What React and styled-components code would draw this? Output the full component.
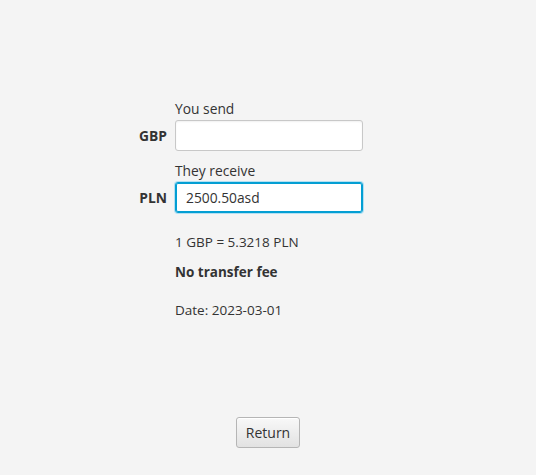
import React from 'react';
import styled, { createGlobalStyle } from 'styled-components';

const GlobalStyle = createGlobalStyle`
  html, body {
    margin: 0;
    padding: 0;
    background: #f4f4f4;
  }
  body {
    font-family: "Open Sans", "Noto Sans", sans-serif;
    color: #333;
  }
`;

const Page = styled.div`
  height: 475px;
  display: flex;
  flex-direction: column;
  align-items: center;
  background: #f4f4f4;
  box-sizing: border-box;
  padding-top: 100px;
`;

const Form = styled.div`
  align-self: flex-start;
  margin-left: 107px;
  display: grid;
  grid-template-columns: 60px 188px;
  column-gap: 8px;
`;

const Caption = styled.div`
  grid-column: 2;
  font-size: 13.8px;
  line-height: 18px;
  margin-top: ${p => p.$top || 0}px;
  margin-bottom: 2px;
  color: #333;
`;

const Code = styled.div`
  grid-column: 1;
  display: flex;
  align-items: center;
  justify-content: flex-end;
  font-size: 13.8px;
  font-weight: bold;
  color: #333;
`;

const Field = styled.input`
  grid-column: 2;
  box-sizing: border-box;
  width: 188px;
  height: 31px;
  margin: 0;
  padding: 0 10px;
  font-family: inherit;
  font-size: 13.8px;
  color: #333;
  background: #fff;
  border: 1px solid ${p => (p.$focused ? '#039ed3' : '#c8c8c8')};
  border-radius: 3px;
  outline: none;
  box-shadow: ${p => (p.$focused ? '0 0 0 1px #b3e0f2, inset 0 0 0 1px #039ed3' : 'inset 0 1px 2px rgba(0,0,0,0.06)')};
`;

const Info = styled.div`
  grid-column: 2;
  font-size: 13.5px;
  line-height: 18px;
  font-weight: ${p => (p.$bold ? 'bold' : 'normal')};
  margin-top: ${p => p.$top}px;
  color: #333;
`;

const ReturnButton = styled.button`
  margin-top: auto;
  margin-bottom: 27px;
  width: 64px;
  height: 31px;
  padding: 0;
  font-family: inherit;
  font-size: 14px;
  color: #333;
  border: 1px solid #b5b5b5;
  border-radius: 3px;
  background: linear-gradient(#f8f8f8, #e2e2e2);
  box-shadow: inset 0 1px 0 #fff;
  cursor: pointer;
`;

export default function App() {
  return (
    <Page>
      <GlobalStyle />
      <Form>
        <Caption>You send</Caption>
        <Code>GBP</Code>
        <Field defaultValue="" />
        <Caption $top={11}>They receive</Caption>
        <Code>PLN</Code>
        <Field $focused defaultValue="2500.50asd" />
        <Info $top={20}>1 GBP = 5.3218 PLN</Info>
        <Info $bold $top={12}>No transfer fee</Info>
        <Info $top={20}>Date: 2023-03-01</Info>
      </Form>
      <ReturnButton>Return</ReturnButton>
    </Page>
  );
}
